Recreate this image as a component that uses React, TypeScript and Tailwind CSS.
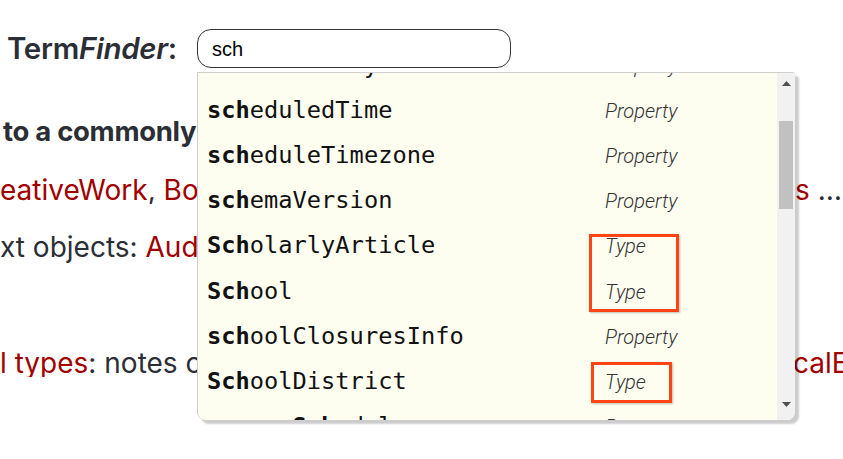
import React from "react";

type Item = { pre: string; hl: string; post: string; kind: "Property" | "Type" };

const items: Item[] = [
  { pre: "", hl: "sch", post: "eduledPaymentDate", kind: "Property" },
  { pre: "", hl: "sch", post: "eduledTime", kind: "Property" },
  { pre: "", hl: "sch", post: "eduleTimezone", kind: "Property" },
  { pre: "", hl: "sch", post: "emaVersion", kind: "Property" },
  { pre: "", hl: "Sch", post: "olarlyArticle", kind: "Type" },
  { pre: "", hl: "Sch", post: "ool", kind: "Type" },
  { pre: "", hl: "sch", post: "oolClosuresInfo", kind: "Property" },
  { pre: "", hl: "Sch", post: "oolDistrict", kind: "Type" },
  { pre: "course", hl: "Sch", post: "edule", kind: "Property" },
];

export default function App() {
  return (
    <div className="relative w-[843px] h-[459px] overflow-hidden bg-white font-['Inter',sans-serif] text-[#2b2e35]">
      {/* Header */}
      <div className="flex items-center pt-[29px] pl-[7px] h-[68px]">
        <div className="w-[190px] text-[29.5px] font-semibold leading-none tracking-[-0.3px]">
          Term<span className="italic">Finder</span>:
        </div>
        <div className="w-[314px] h-[39px] rounded-[14px] border border-[#333] flex items-center pl-[14px] font-['Liberation_Sans',sans-serif] text-[20px] text-black">
          sch
        </div>
      </div>

      {/* Background content */}
      <div className="mt-[50px] text-[28px] leading-none whitespace-nowrap">
        <div className="pl-[3px] font-bold text-[27.5px] tracking-[-0.3px]">to a commonly used type</div>
        <div className="mt-[30px] flex">
          <span className="w-[795px] shrink-0 overflow-hidden">
            <span className="text-[#a00000]">eativeWork</span>, <span className="text-[#a00000]">Book</span>
          </span>
          <span className="shrink-0">
            <span className="text-[#a00000]">s</span> …
          </span>
        </div>
        <div className="mt-[29px]">
          xt objects: <span className="text-[#a00000]">AudioObject</span>
        </div>
        <div className="mt-[88px] flex">
          <span className="w-[793px] shrink-0 overflow-hidden">
            <span className="text-[#a00000]">l types</span>: notes on
          </span>
          <span className="shrink-0 text-[#a00000]">calEntity</span>
        </div>
      </div>

      {/* Dropdown */}
      <div className="absolute left-[197px] top-[72px] w-[598px] h-[348px] bg-[#fdfdf0] border-l border-t border-[#cfcfcf] rounded-tr-[3px] rounded-b-[8px] shadow-[4px_4px_2px_rgba(0,0,0,0.2)] overflow-hidden flex">
        <div className="flex-1 overflow-hidden">
          <div className="-mt-[30px]">
            {items.map((it, i) => (
              <div key={i} className="h-[45.2px] flex items-center pl-[9px]">
                <div className="w-[398px] font-['DejaVu_Sans_Mono',monospace] text-[23.7px] text-[#111] leading-none">
                  {it.pre}
                  <span className="font-bold">{it.hl}</span>
                  {it.post}
                </div>
                <div className="font-['Roboto',sans-serif] font-light italic text-[20px] text-[#333] leading-none">
                  {it.kind}
                </div>
              </div>
            ))}
          </div>
        </div>
        {/* Scrollbar */}
        <div className="w-[18px] bg-[#f1f1f1] flex flex-col items-center">
          <div className="h-[20px] flex items-center justify-center pt-[1px]">
            <svg width="9" height="5" viewBox="0 0 9 5">
              <polygon points="0,5 9,5 4.5,0" fill="#505050" />
            </svg>
          </div>
          <div className="mt-[28px] w-[14px] h-[88px] bg-[#c1c1c1]" />
          <div className="flex-1" />
          <div className="h-[22px] flex items-start justify-center pt-[4px]">
            <svg width="9" height="5" viewBox="0 0 9 5">
              <polygon points="0,0 9,0 4.5,5" fill="#505050" />
            </svg>
          </div>
        </div>
      </div>

      {/* Annotation boxes */}
      <div className="absolute left-[589px] top-[234px] w-[90px] h-[78px] border-[3px] border-[#ff4414] shadow-[1px_1px_2px_rgba(0,0,0,0.25)]" />
      <div className="absolute left-[591px] top-[362px] w-[81px] h-[41px] border-[3px] border-[#ff4414] shadow-[1px_1px_2px_rgba(0,0,0,0.25)]" />
    </div>
  );
}
